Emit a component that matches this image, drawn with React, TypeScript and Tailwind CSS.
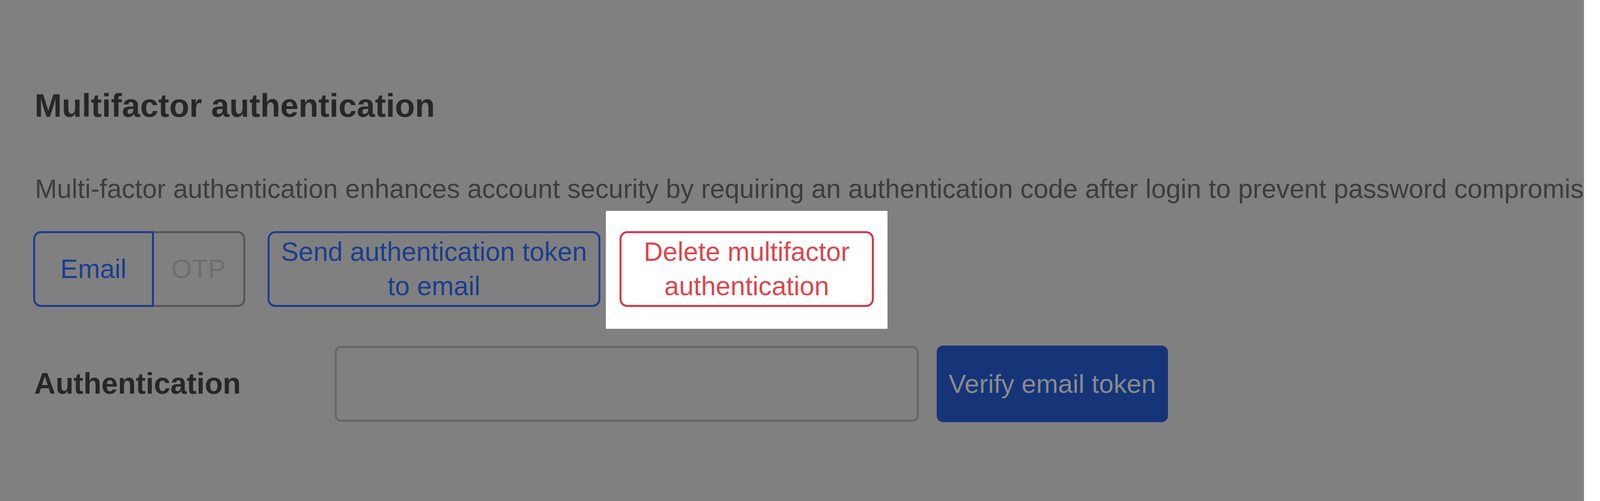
import React from "react";

export default function App() {
  return (
    <div className="flex w-full h-screen overflow-hidden bg-white font-['Liberation_Sans',Arial,sans-serif]">
      {/* ─── Dimmed page ─── */}
      <div className="flex-1 min-w-0 h-full bg-[#808080] overflow-hidden pl-[2.07vw] pt-[218px]">
        <h2 className="pl-[0.09vw] text-[2.048vw] leading-[105px] font-bold text-[#272727] whitespace-nowrap">
          Multifactor authentication
        </h2>
        <p className="mt-[117px] pl-[0.113vw] text-[1.654vw] leading-[88px] text-[#3d3d3d] whitespace-nowrap overflow-hidden">
          Multi-factor authentication enhances account security by requiring an authentication code after login to prevent password compromise.
        </p>

        {/* ─── Actions ─── */}
        <div className="mt-[64px] flex items-start">
          <div className="flex h-[194px] text-[1.654vw] leading-[88px]">
            <div className="w-[7.538vw] flex items-center justify-center border-[5px] border-[#1a3d8f] rounded-l-[20px] text-[#1a3d8f]">
              Email
            </div>
            <div className="w-[5.716vw] flex items-center justify-center border-y-[5px] border-r-[5px] border-[#555555] rounded-r-[20px] text-[#6e6e6e]">
              OTP
            </div>
          </div>

          <div className="ml-[1.395vw] w-[20.81vw] h-[194px] px-[0.45vw] flex items-center justify-center text-center border-[5px] border-[#1a3d8f] rounded-[20px] text-[#1a3d8f] text-[1.654vw] leading-[88px]">
            Send authentication token to email
          </div>

          <div className="ml-[0.338vw] -mr-[0.855vw] -mt-[52px] -mb-[56px] bg-white px-[0.855vw] pt-[52px] pb-[56px]">
            <div className="w-[15.89vw] h-[194px] px-[0.45vw] flex items-center justify-center text-center border-[5px] border-[#dc3545] rounded-[20px] text-[#e0444b] text-[1.654vw] leading-[88px]">
              Delete multifactor authentication
            </div>
          </div>
        </div>

        {/* ─── Token row ─── */}
        <div className="mt-[99px] flex items-center">
          <div className="w-[18.86vw] pl-[0.068vw] text-[1.845vw] font-bold text-[#262626] whitespace-nowrap">
            Authentication
          </div>
          <div className="w-[36.48vw] h-[194px] border-[5px] border-[#666666] rounded-[16px]" />
          <div className="ml-[1.125vw] w-[14.47vw] h-[196px] flex items-center justify-center bg-[#163579] rounded-[16px] text-[1.643vw] text-[#8b8b8b] whitespace-nowrap">
            Verify email token
          </div>
        </div>
      </div>
      <div className="w-[0.99vw] shrink-0 h-full bg-white" />
    </div>
  );
}
